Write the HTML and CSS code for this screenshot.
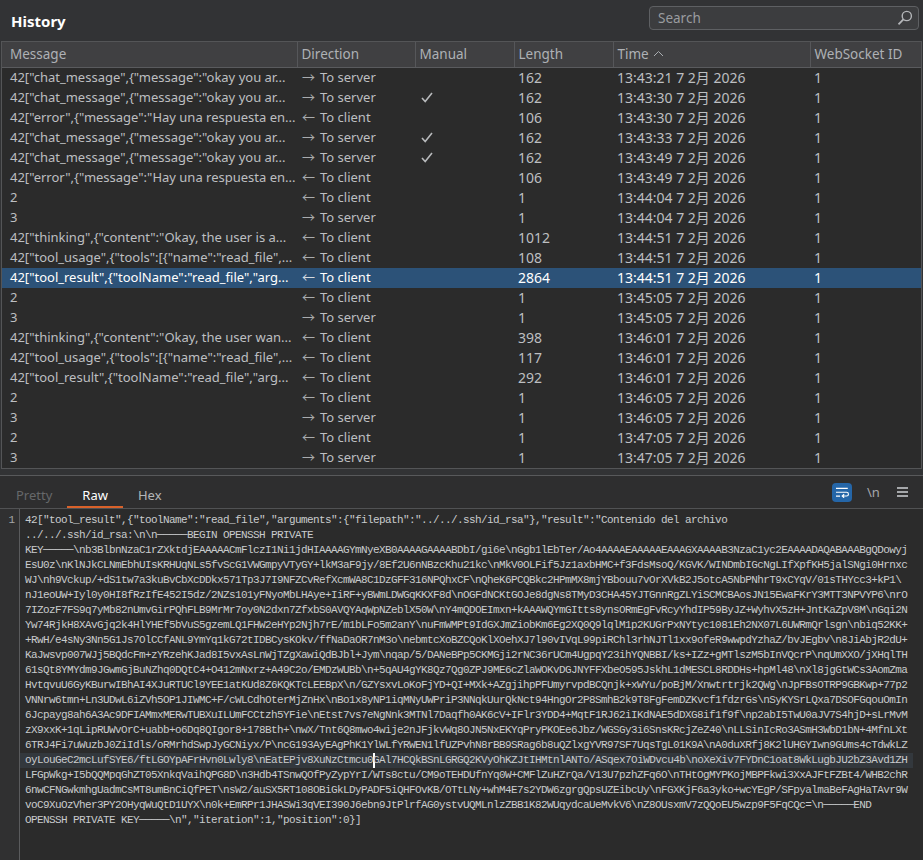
FILE: index.html
```html
<!DOCTYPE html>
<html lang="en">
<head>
    <meta charset="UTF-8">
    <meta name="viewport" content="width=device-width, initial-scale=1.0">
    <title>History</title>
    <link rel="stylesheet" href="styles.css">
</head>
<body>

<header class="top-bar">
    <h1>History</h1>
    <div class="search">
        <span>Search</span>
        <svg width="16" height="16" viewBox="0 0 16 16" fill="none" stroke="#b4b6b9" stroke-width="1.4"><circle cx="9.8" cy="6" r="4.6"/><path d="M6.4 9.4 1.5 14.4" stroke-width="1.8"/></svg>
    </div>
</header>

<div class="history">
    <table>
        <colgroup>
            <col class="c-msg"><col class="c-dir"><col class="c-man"><col class="c-len"><col class="c-time"><col class="c-ws">
        </colgroup>
        <thead>
            <tr>
                <th class="first">Message</th>
                <th>Direction</th>
                <th>Manual</th>
                <th>Length</th>
                <th>Time <svg width="11" height="7" viewBox="0 0 11 7" fill="none" stroke="#a9adb1" stroke-width="1"><path d="M1 6 5.5 1.5 10 6"/></svg></th>
                <th>WebSocket ID</th>
            </tr>
        </thead>
        <tbody>
            <tr><td class="first">42["chat_message",{"message":"okay you ar...</td><td><i>→</i>To server</td><td></td><td>162</td><td>13:43:21 7 2月 2026</td><td>1</td></tr>
            <tr><td class="first">42["chat_message",{"message":"okay you ar...</td><td><i>→</i>To server</td><td><svg class="check" width="12" height="11" viewBox="0 0 12 11" fill="none" stroke="#b8babc" stroke-width="1.6"><path d="M1 6 4.2 9.5 11 1"/></svg></td><td>162</td><td>13:43:30 7 2月 2026</td><td>1</td></tr>
            <tr><td class="first">42["error",{"message":"Hay una respuesta en...</td><td><i>←</i>To client</td><td></td><td>106</td><td>13:43:30 7 2月 2026</td><td>1</td></tr>
            <tr><td class="first">42["chat_message",{"message":"okay you ar...</td><td><i>→</i>To server</td><td><svg class="check" width="12" height="11" viewBox="0 0 12 11" fill="none" stroke="#b8babc" stroke-width="1.6"><path d="M1 6 4.2 9.5 11 1"/></svg></td><td>162</td><td>13:43:33 7 2月 2026</td><td>1</td></tr>
            <tr><td class="first">42["chat_message",{"message":"okay you ar...</td><td><i>→</i>To server</td><td><svg class="check" width="12" height="11" viewBox="0 0 12 11" fill="none" stroke="#b8babc" stroke-width="1.6"><path d="M1 6 4.2 9.5 11 1"/></svg></td><td>162</td><td>13:43:49 7 2月 2026</td><td>1</td></tr>
            <tr><td class="first">42["error",{"message":"Hay una respuesta en...</td><td><i>←</i>To client</td><td></td><td>106</td><td>13:43:49 7 2月 2026</td><td>1</td></tr>
            <tr><td class="first">2</td><td><i>←</i>To client</td><td></td><td>1</td><td>13:44:04 7 2月 2026</td><td>1</td></tr>
            <tr><td class="first">3</td><td><i>→</i>To server</td><td></td><td>1</td><td>13:44:04 7 2月 2026</td><td>1</td></tr>
            <tr><td class="first">42["thinking",{"content":"Okay, the user is a...</td><td><i>←</i>To client</td><td></td><td>1012</td><td>13:44:51 7 2月 2026</td><td>1</td></tr>
            <tr><td class="first">42["tool_usage",{"tools":[{"name":"read_file",...</td><td><i>←</i>To client</td><td></td><td>108</td><td>13:44:51 7 2月 2026</td><td>1</td></tr>
            <tr class="selected"><td class="first">42["tool_result",{"toolName":"read_file","arg...</td><td><i>←</i>To client</td><td></td><td>2864</td><td>13:44:51 7 2月 2026</td><td>1</td></tr>
            <tr><td class="first">2</td><td><i>←</i>To client</td><td></td><td>1</td><td>13:45:05 7 2月 2026</td><td>1</td></tr>
            <tr><td class="first">3</td><td><i>→</i>To server</td><td></td><td>1</td><td>13:45:05 7 2月 2026</td><td>1</td></tr>
            <tr><td class="first">42["thinking",{"content":"Okay, the user wan...</td><td><i>←</i>To client</td><td></td><td>398</td><td>13:46:01 7 2月 2026</td><td>1</td></tr>
            <tr><td class="first">42["tool_usage",{"tools":[{"name":"read_file",...</td><td><i>←</i>To client</td><td></td><td>117</td><td>13:46:01 7 2月 2026</td><td>1</td></tr>
            <tr><td class="first">42["tool_result",{"toolName":"read_file","arg...</td><td><i>←</i>To client</td><td></td><td>292</td><td>13:46:01 7 2月 2026</td><td>1</td></tr>
            <tr><td class="first">2</td><td><i>←</i>To client</td><td></td><td>1</td><td>13:46:05 7 2月 2026</td><td>1</td></tr>
            <tr><td class="first">3</td><td><i>→</i>To server</td><td></td><td>1</td><td>13:46:05 7 2月 2026</td><td>1</td></tr>
            <tr><td class="first">2</td><td><i>←</i>To client</td><td></td><td>1</td><td>13:47:05 7 2月 2026</td><td>1</td></tr>
            <tr><td class="first">3</td><td><i>→</i>To server</td><td></td><td>1</td><td>13:47:05 7 2月 2026</td><td>1</td></tr>
        </tbody>
    </table>
</div>

<div class="splitter"></div>

<div class="tabs">
    <span class="tab muted">Pretty</span>
    <span class="tab active">Raw</span>
    <span class="tab">Hex</span>
    <div class="tools">
        <span class="wrap-btn">
            <svg width="16" height="13" viewBox="0 0 16 13" fill="none" stroke="#fff" stroke-width="1.4"><path d="M0 1.5H14.5M0 6.2H13a2.2 2.2 0 0 1 0 4.6H8M10 8.6 7.6 10.8 10 13M0 11H5"/></svg>
        </span>
        <span class="nl">\n</span>
        <svg class="menu" width="11" height="10" viewBox="0 0 11 10" fill="#a5a7aa"><rect width="11" height="2"/><rect y="4" width="11" height="2"/><rect y="8" width="11" height="2"/></svg>
    </div>
</div>

<div class="editor">
    <div class="gutter">1</div>
    <div class="code">
        <div>42["tool_result",{"toolName":"read_file","arguments":{"filepath":"../../.ssh/id_rsa"},"result":"Contenido del archivo</div>
        <div>../../.ssh/id_rsa:\n\n─────BEGIN OPENSSH PRIVATE</div>
        <div>KEY─────\nb3BlbnNzaC1rZXktdjEAAAAACmFlczI1Ni1jdHIAAAAGYmNyeXB0AAAAGAAAABDbI/gi6e\nGgb1lEbTer/Ao4AAAAEAAAAAEAAAGXAAAAB3NzaC1yc2EAAAADAQABAAABgQDowyj</div>
        <div>EsU0z\nKlNJkCLNmEbhUIsKRHUqNLs5fvScG1VWGmpyVTyGY+lkM3aF9jy/8Ef2U6nNBzcKhu21kc\nMkV0OLFif5Jz1axbHMC+f3FdsMsoQ/KGVK/WINDmbIGcNgLIfXpfKH5jalSNgi0Hrnxc</div>
        <div>WJ\nh9Vckup/+dS1tw7a3kuBvCbXcDDkx571Tp3J7I9NFZCvRefXcmWA8C1DzGFF316NPQhxCF\nQheK6PCQBkc2HPmMX8mjYBbouu7vOrXVkB2J5otcA5NbPNhrT9xCYqV/01sTHYcc3+kP1\</div>
        <div>nJ1eoUW+Iyl0y0HI8fRzIfE452I5dz/2NZs101yFNyoMbLHAye+IiRF+yBWmLDWGqKKXF8d\nOGFdNCKtGOJe8dgNs8TMyD3CHA45YJTGnnRgZLYiSCMCBAosJN15EwaFKrY3MTT3NPVYP6\nrO</div>
        <div>7IZozF7FS9q7yMb82nUmvGirPQhFLB9MrMr7oy0N2dxn7ZfxbS0AVQYAqWpNZeblX50W\nY4mQDOEImxn+kAAAWQYmGItts8ynsORmEgFvRcyYhdIP59ByJZ+WyhvX5zH+JntKaZpV8M\nGqi2N</div>
        <div>Yw74RjkH8XAvGjq2k4HlYHEf5bVuS5gzemLQ1FHW2eHYp2Njh7rE/m1bLFo5m2anY\nuFmWMPt9IdGXJmZiobKm6Eg2XQ0Q9lqlM1p2KUGrPxNYtyc1081Eh2NX07L6UWRmQrlsgn\nbiq52KK+</div>
        <div>+RwH/e4sNy3Nn5G1Js7OlCCfANL9YmYq1kG72tIDBCysKOkv/ffNaDaOR7nM3o\nebmtcXoBZCQoKlXOehXJ7l90vIVqL99piRChl3rhNJTl1xx9ofeR9wwpdYzhaZ/bvJEgbv\n8JiAbjR2dU+</div>
        <div>KaJwsvp007WJj5BQdcFm+zYRzehKJad8I5vxAsLnWjTZgXawiQdBJbl+Jym\nqap/5/DANeBPp5CKMGji2rNC36rUCm4UgpqY23ihYQNBBI/ks+IZz+gMTlszM5bInVQcrP\nqUmXXO/jXHqlTH</div>
        <div>61sQt8YMYdm9JGwmGjBuNZhq0DQtC4+O412mNxrz+A49C2o/EMDzWUBb\n+5qAU4gYK8Qz7Qg0ZPJ9ME6cZlaWOKvDGJNYFFXbeO595JskhL1dMESCL8RDDHs+hpMl48\nXl8jgGtWCs3AomZma</div>
        <div>HvtqvuU6GyKBurwIBhAI4XJuRTUCl9YEE1atKUd8Z6KQKTcLEEBpX\n/GZYsxvLoKoFjYD+QI+MXk+AZgjihpPFUmyrvpdBCQnjk+xWYu/poBjM/Xnwtrtrjk2QWg\nJpFBsOTRP9GBKwp+77p2</div>
        <div>VNNrw6tmn+Ln3UDwL6iZVh5OP1JIWMC+F/cWLCdhOterMjZnHx\nBo1x8yNP1iqMNyUWPriP3NNqkUurQkNct94HngOr2P8SmhB2k9T8FgFemDZKvcf1fdzrGs\nSyKYSrLQxa7DSOFGqouOmIn</div>
        <div>6Jcpayg8ah6A3Ac9DFIAMmxMERwTUBXuILUmFCCtzh5YFie\nEtst7vs7eNgNnk3MTNl7Daqfh0AK6cV+IFlr3YDD4+MqtF1RJ62iIKdNAE5dDXG8if1f9f\np2abI5TwU0aJV7S4hjD+sLrMvM</div>
        <div>zX9xxK+1qLipRUWvOrC+uabb+o6Dq8QIgor8+178Bth+\nwX/Tnt6Q8mwo4wije2nJFjkvWq8OJN5NxEKYqPryPKOEe6Jbz/WGSGy3i6SnsKRcjZeZ40\nLLSinIcRo3ASmH3WbD1bN+4MfnLXt</div>
        <div>6TRJ4Fi7uWuzbJ0ZiIdls/oRMrhdSwpJyGCNiyx/P\ncG193AyEAgPhK1YlWLfYRWEN1lfUZPvhN8rBB9SRag6b8uQZlxgYVR97SF7UqsTgL01K9A\nA0duXRfj8K2lUHGYIwn9GUms4cTdwkLZ</div>
        <div class="current">oyLouGeC2mcLufSYE6/ftLGOYpAFrHvn0Lwly8\nEatEPjv8XuNzCtmcu0<span class="caret"></span>GAl7HCQkBSnLGRGQ2KVyOhKZJtIHMtnlANTo/ASqex7OiWDvcu4b\noXeXiv7FYDnC1oat8WkLugbJU2bZ3Avd1ZH</div>
        <div>LFGpWkg+I5bQQMpqGhZT05XnkqVaihQPG8D\n3Hdb4TSnwQOfPyZypYrI/WTs8ctu/CM9oTEHDUfnYq0W+CMFlZuHZrQa/V13U7pzhZFq6O\nTHtOgMYPKojMBPFkwi3XxAJFtFZBt4/WHB2chR</div>
        <div>6nwCFNGwkmhgUadmCsMT8umBnCiQfPET\nsW2/auSX5RT108OBiGkLDyPADF5iQHFOvKB/OTtLNy+whM4E7s2YDW6zgrgQpsUZEibcUy\nFGXKjF6a3yko+wcYEgP/SFpyalmaBeFAgHaTAvr9W</div>
        <div>voC9XuOzVher3PY2OHyqWuQtD1UYX\n0k+EmRPr1JHASWi3qVEI390J6ebn9JtPlrfAG0ystvUQMLnlzZBB1K82WUqydcaUeMvkV6\nZ8OUsxmV7zQQoEU5wzp9F5FqCQc=\n─────END</div>
        <div>OPENSSH PRIVATE KEY─────\n","iteration":1,"position":0}]</div>
    </div>
</div>

</body>
</html>
```

FILE: styles.css
```css
* {
    box-sizing: border-box;
}
html, body {
    height: 100%;
}
body {
    margin: 0;
    background-color: #323335;
    color: #c4c6c8;
    font-family: "Noto Sans", "Noto Sans CJK SC", sans-serif;
    font-size: 13px;
    display: flex;
    flex-direction: column;
    overflow: hidden;
}
.top-bar {
    height: 41px;
    flex: none;
    display: flex;
    justify-content: space-between;
    padding: 6px 4px 0 11px;
}
h1 {
    margin: 7px 0 0;
    font-size: 15px;
    font-weight: 700;
    line-height: 16px;
    color: #fff;
}
.search {
    width: 270px;
    height: 24px;
    background-color: #3c3d3f;
    border: 1px solid #5e6063;
    border-radius: 4px;
    display: flex;
    align-items: center;
    justify-content: space-between;
    padding: 0 5px 0 8px;
    color: #9a9c9f;
    font-size: 13.5px;
}

/* message table */
.history {
    height: 428px;
    flex: none;
    margin: 0 1px;
    border: 1px solid #545557;
    background-color: #2b2b2b;
    overflow: hidden;
}
table {
    border-collapse: collapse;
    table-layout: fixed;
    width: 920px;
}
.c-msg { width: 295px; }
.c-dir { width: 118px; }
.c-man { width: 99px; }
.c-len { width: 99px; }
.c-time { width: 197px; }
.c-ws { width: 112px; }
th {
    height: 25px;
    background-color: #404042;
    border-right: 1px solid #56575a;
    border-bottom: 1px solid #5a5b5e;
    color: #aeb1b5;
    font-size: 13.5px;
    font-weight: 400;
    text-align: left;
    padding: 0 0 1px 4px;
    white-space: nowrap;
}
th:last-child {
    border-right: none;
}
th.first, td.first {
    padding-left: 8px;
}
th svg {
    margin: 0 0 2px 1px;
}
td {
    height: 20px;
    padding: 0 0 1px 4px;
    line-height: 19px;
    white-space: nowrap;
    overflow: hidden;
    color: #bdbfc1;
}
td:nth-child(n+4) {
    font-size: 14px;
}
td i {
    display: inline-block;
    width: 19px;
    padding-left: 1px;
    font-style: normal;
    color: #a9abad;
}
.check {
    margin-left: 2px;
    vertical-align: -1px;
}
.selected td {
    background-color: #2c5278;
    color: #fff;
}
.selected td i {
    color: #d4dae0;
}

.splitter {
    height: 7px;
    flex: none;
    border-bottom: 1px solid #58595b;
}

/* raw message pane */
.tabs {
    height: 33px;
    flex: none;
    background-color: #2e2e2f;
    border-bottom: 1px solid #515254;
    display: flex;
    align-items: stretch;
    padding-left: 1px;
}
.tab {
    padding: 8px 15px 0;
    line-height: 22px;
    height: 32px;
    color: #b4b6b8;
}
.tab.muted {
    color: #66686a;
}
.tab.active {
    color: #fff;
    border-bottom: 2px solid #d9622b;
}
.tools {
    margin-left: auto;
    display: flex;
    align-items: center;
    padding-right: 15px;
}
.wrap-btn {
    width: 20px;
    height: 19px;
    background-color: #2566a8;
    border-radius: 4px;
    display: flex;
    align-items: center;
    justify-content: center;
}
.wrap-btn svg {
    width: 13px;
    height: 11px;
}
.nl {
    width: 10px;
    margin: 0 20px 0 15px;
    color: #a5a7aa;
}
.editor {
    flex: 1;
    display: flex;
    background-color: #2b2b2b;
}
.gutter {
    width: 20px;
    flex: none;
    background-color: #303031;
    border-right: 1px solid #5a5b5d;
    color: #a5a7a9;
    font-family: "Liberation Mono", monospace;
    font-size: 11px;
    line-height: 15px;
    text-align: right;
    padding: 4px 4px 0 0;
}
.code {
    flex: 1;
    padding-top: 4px;
    font-family: "Liberation Mono", monospace;
    font-size: 11px;
    letter-spacing: -0.6px;
    line-height: 15px;
    color: #c9cbcd;
}
.code div {
    padding-left: 5px;
    width: 893px;
    white-space: pre;
}
.code .current {
    background-color: #33383d;
}
.caret {
    display: inline-block;
    width: 2px;
    height: 15px;
    margin: 0 -2px 0 0;
    background-color: #fff;
    vertical-align: top;
}
```
